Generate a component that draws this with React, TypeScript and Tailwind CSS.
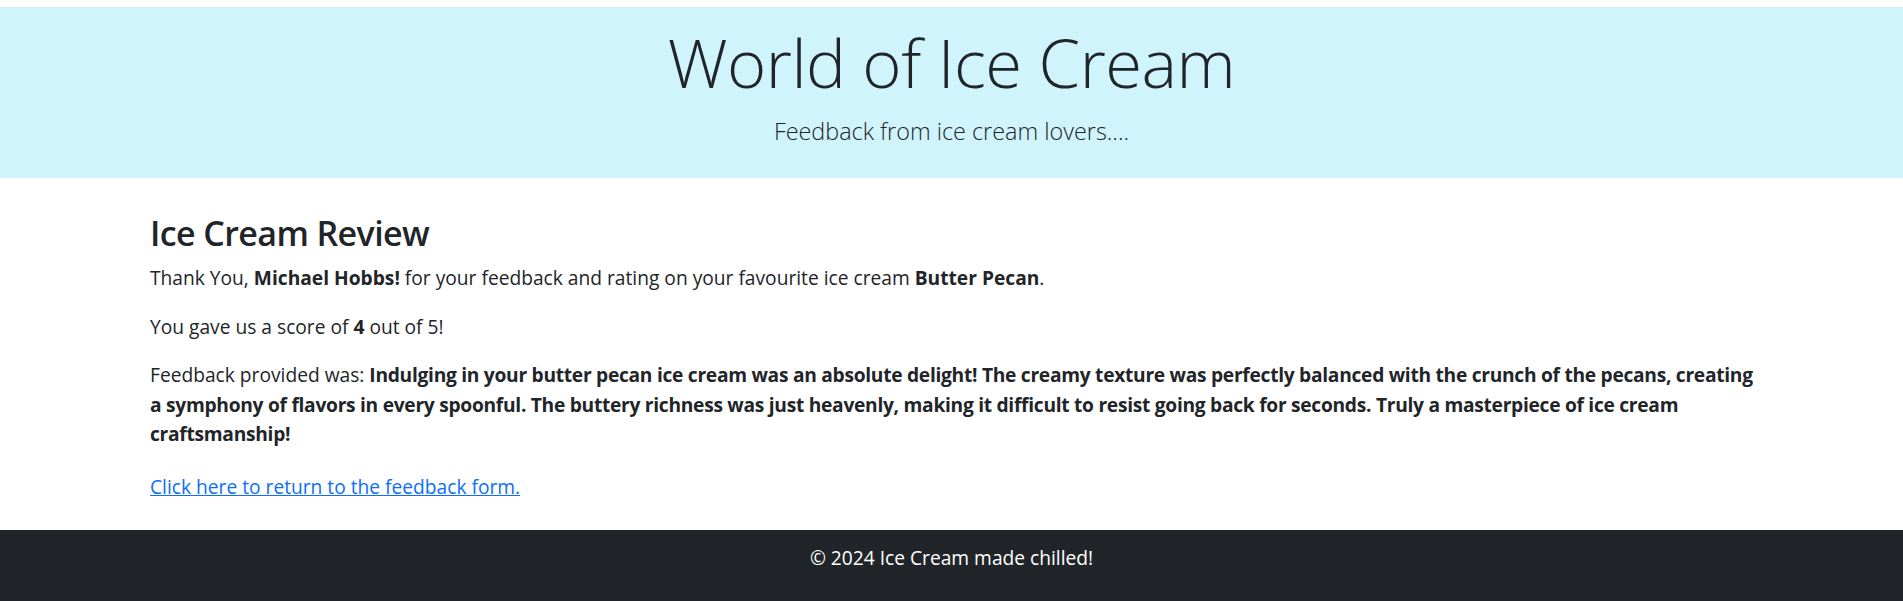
export default function App() {
  return (
    <div className="min-h-[601px] flex flex-col bg-white text-[#212529] font-['Open_Sans',sans-serif]">
      <header className="mt-[7px] h-[171px] bg-[#cff4fc] flex flex-col items-center">
        <h1 className="mt-[15px] text-[67px] leading-[80px] font-light tracking-[-0.5px]">World of Ice Cream</h1>
        <p className="mt-[15px] text-[23.4px] leading-[29px] font-light">Feedback from ice cream lovers....</p>
      </header>

      <main className="flex-1 pl-[150px] pr-[110px] pt-[32px] pb-[18px] text-[19.2px] leading-[29.5px]">
        <h2 className="text-[34px] leading-[46px] font-semibold tracking-[-0.6px] mb-[7px]">Ice Cream Review</h2>
        <p className="mb-[19px]">
          Thank You, <b>Michael Hobbs!</b> for your feedback and rating on your favourite ice cream{" "}
          <b>Butter Pecan</b>.
        </p>
        <p className="mb-[19px]">
          You gave us a score of <b>4</b> out of 5!
        </p>
        <p className="mb-[23px]">
          Feedback provided was:{" "}
          <b className="tracking-[-0.28px]">
            Indulging in your butter pecan ice cream was an absolute delight! The creamy texture was perfectly
            balanced with the crunch of the pecans, creating
            <br />a symphony of flavors in every spoonful. The buttery richness was just heavenly, making it difficult
            to resist going back for seconds. Truly a masterpiece of ice cream craftsmanship!
          </b>
        </p>
        <p>
          <a href="#" className="text-[#0d6efd] underline">
            Click here to return to the feedback form.
          </a>
        </p>
      </main>

      <footer className="h-[71px] bg-[#212529] text-white text-center pt-[13px] text-[19.2px] leading-[29px]">
        © 2024 Ice Cream made chilled!
      </footer>
    </div>
  );
}
